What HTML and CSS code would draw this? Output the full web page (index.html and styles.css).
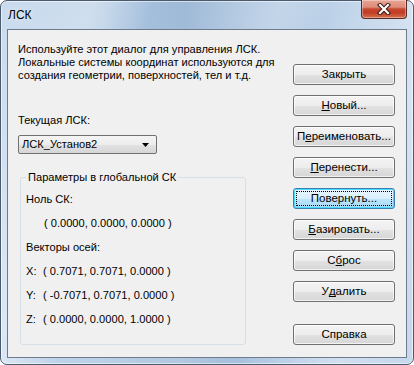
FILE: index.html
```html
<!DOCTYPE html>
<html lang="ru">
<head>
<meta charset="utf-8">
<title>ЛСК</title>
<link rel="stylesheet" href="styles.css">
</head>
<body>
<div class="window">
  <div class="titlebar">
    <span class="title">ЛСК</span>
    <div class="close">
      <svg width="14" height="12" viewBox="0 0 14 12">
        <path d="M3 2 L11 10 M11 2 L3 10" stroke="#3b1a17" stroke-width="4.2" stroke-linecap="square" fill="none"/>
        <path d="M3 2 L11 10 M11 2 L3 10" stroke="#ffffff" stroke-width="2.2" stroke-linecap="square" fill="none"/>
      </svg>
    </div>
  </div>
  <div class="client">
    <div class="left">
      <p class="desc">Используйте этот диалог для управления ЛСК.<br>Локальные системы координат используются для<br>создания геометрии, поверхностей, тел и т.д.</p>
      <div class="label">Текущая ЛСК:</div>
      <div class="combo">
        <span>ЛСК_Установ2</span>
        <svg width="7" height="4" viewBox="0 0 7 4"><path d="M0 0 H7 L3.5 4 Z" fill="#000"/></svg>
      </div>
      <fieldset class="group">
        <legend>Параметры в глобальной СК</legend>
        <div class="rows">
          <div class="row">Ноль СК:</div>
          <div class="row value">( 0.0000, 0.0000, 0.0000 )</div>
          <div class="row">Векторы осей:</div>
          <div class="row"><span class="axis">X:</span>( 0.7071, 0.7071, 0.0000 )</div>
          <div class="row"><span class="axis">Y:</span>( -0.7071, 0.7071, 0.0000 )</div>
          <div class="row"><span class="axis">Z:</span>( 0.0000, 0.0000, 1.0000 )</div>
        </div>
      </fieldset>
    </div>
    <div class="buttons">
      <div class="btn">Закрыть</div>
      <div class="btn"><u>Н</u>овый...</div>
      <div class="btn">П<u>е</u>реименовать...</div>
      <div class="btn"><u>П</u>еренести...</div>
      <div class="btn default"><span class="focus">Повернуть...</span></div>
      <div class="btn"><u>Б</u>азировать...</div>
      <div class="btn">С<u>б</u>рос</div>
      <div class="btn">У<u>д</u>алить</div>
      <div class="btn help">Справка</div>
    </div>
  </div>
</div>
</body>
</html>
```

FILE: styles.css
```css
html, body {
  margin: 0;
  padding: 0;
  background: #ffffff;
}
body {
  width: 414px;
  height: 365px;
  overflow: hidden;
  font-family: "Liberation Sans", Arial, sans-serif;
  font-size: 11.1px;
  color: #000;
}
.window {
  box-sizing: border-box;
  width: 414px;
  height: 365px;
  border: 1px solid #4c5a6e;
  border-radius: 7px;
  padding: 0 6px 6px 6px;
  display: flex;
  flex-direction: column;
  background:
    linear-gradient(105deg, rgba(255,255,255,0) 0%, rgba(255,255,255,0.35) 18%, rgba(255,255,255,0) 30%, rgba(255,255,255,0.25) 55%, rgba(255,255,255,0) 65%, rgba(255,255,255,0.3) 85%, rgba(255,255,255,0) 100%),
    linear-gradient(90deg, #c9dbee 0%, #b3cbe4 25%, #98b5d5 45%, #a9c2de 60%, #bcd1e8 80%, #c6d8ec 100%);
  box-shadow: inset 0 0 0 1px rgba(255,255,255,0.55);
}
.titlebar {
  height: 28px;
  display: flex;
  justify-content: space-between;
  align-items: flex-start;
  padding-left: 1px;
}
.title {
  margin-top: 7px;
  font-size: 12px;
  line-height: 15px;
  color: #000;
  text-shadow: 0 0 6px rgba(255,255,255,0.9);
}
.close {
  width: 46px;
  height: 19px;
  margin-top: -1px;
  box-sizing: border-box;
  border: 1px solid #5a2a26;
  border-top: none;
  border-radius: 0 0 4px 4px;
  background: linear-gradient(180deg, #e8a493 0%, #dd8c79 40%, #c6462f 50%, #c13d25 70%, #d5714f 100%);
  box-shadow: inset 0 0 0 1px rgba(255,255,255,0.35);
  display: flex;
  align-items: center;
  justify-content: center;
}
.client {
  flex: 1;
  display: flex;
  background: #f0f0f0;
  border: 1px solid #6d7b8d;
}
.left {
  flex: 1;
  padding-left: 10px;
  padding-top: 13px;
}
.desc {
  margin: 0;
  line-height: 13px;
  white-space: nowrap;
}
.label {
  margin-top: 32px;
  line-height: 13px;
}
.combo {
  margin-top: 8px;
  width: 139px;
  height: 19px;
  box-sizing: border-box;
  border: 1px solid #707070;
  border-radius: 2px;
  background: linear-gradient(180deg, #f4f4f4 0%, #ededed 50%, #e2e2e2 51%, #d6d6d6 100%);
  display: flex;
  align-items: center;
  justify-content: space-between;
  padding: 0 7px 0 3px;
  line-height: 15px;
}
.group {
  margin: 16px 0 0 2px;
  padding: 0 5px;
  width: 226px;
  height: 175px;
  box-sizing: border-box;
  border: 1px solid #d5dfe5;
  border-radius: 3px;
  min-width: 0;
}
.group legend {
  padding: 0 2px;
  line-height: 14px;
}
.rows {
  padding-top: 3px;
}
.row {
  line-height: 24px;
  white-space: nowrap;
}
.row.value {
  padding-left: 18px;
}
.axis {
  display: inline-block;
  width: 17px;
}
.buttons {
  width: 102px;
  margin-right: 11px;
  padding-top: 34px;
  display: flex;
  flex-direction: column;
  gap: 10px;
}
.btn {
  height: 21px;
  box-sizing: border-box;
  border: 1px solid #707070;
  border-radius: 3px;
  background: linear-gradient(180deg, #f4f4f4 0%, #ededed 50%, #e2e2e2 51%, #d6d6d6 100%);
  box-shadow: inset 0 0 0 1px rgba(255,255,255,0.7);
  display: flex;
  align-items: center;
  justify-content: center;
  font-size: 11.5px;
  line-height: 15px;
  white-space: nowrap;
}
.btn u {
  text-decoration: underline;
  text-decoration-skip-ink: none;
  text-underline-offset: 1px;
}
.btn.default {
  border-color: #3c7fb1;
  background: linear-gradient(180deg, #eaf6fd 0%, #d9f0fc 50%, #bee6fd 51%, #a7d9f5 100%);
  box-shadow: inset 0 0 0 1px #48d9fe;
  padding: 2px;
}
.btn.default .focus {
  flex: 1;
  align-self: stretch;
  display: flex;
  align-items: center;
  justify-content: center;
  border: 1px dotted #000;
}
.btn.help {
  margin-top: 12px;
}
```
